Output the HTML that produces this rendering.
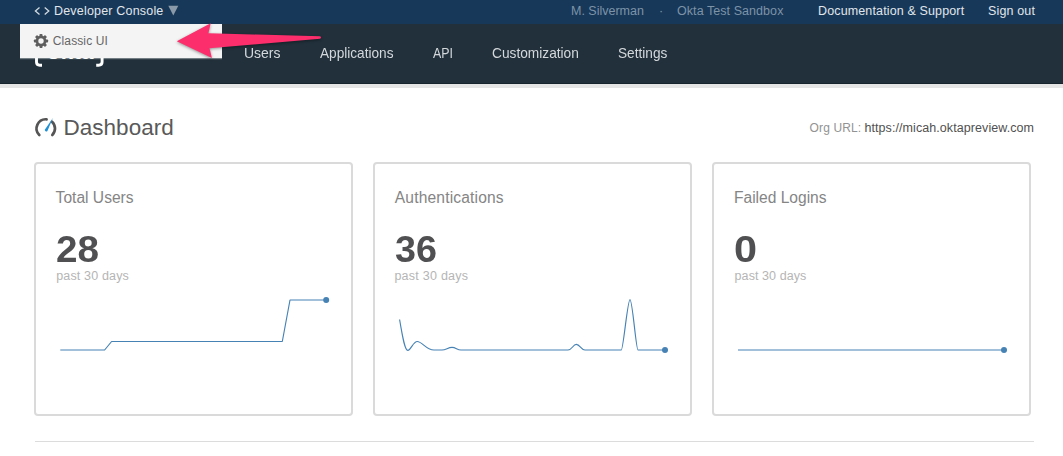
<!DOCTYPE html>
<html><head><meta charset="utf-8">
<style>
html,body{margin:0;padding:0;}
body{width:1063px;height:456px;overflow:hidden;background:#fff;font-family:"Liberation Sans",sans-serif;position:relative;}
.abs{position:absolute;white-space:nowrap;line-height:1;}
#top{position:absolute;left:0;top:0;width:1063px;height:24px;background:#173858;}
#nav{position:absolute;left:0;top:24px;width:1063px;height:60px;background:#21303b;box-shadow:inset 0 -1px 0 #18242d;}
#strip{position:absolute;left:0;top:84px;width:1063px;height:4px;background:#e5e5e5;}
.t1{color:#e0e6ec;font-size:12.5px;}
.t2{color:#7d93a8;font-size:12.5px;}
.nv{color:#d4d8db;font-size:15px;}
#dd{position:absolute;left:20px;top:24px;width:202px;height:34px;background:#f4f4f4;box-shadow:0 1px 0 rgba(255,255,255,0.32),0 2px 0 rgba(255,255,255,0.08);}
.card{position:absolute;top:162px;width:315px;height:250px;border:2px solid #dadada;border-radius:4px;background:#fff;}
.ct{color:#858585;font-size:15.6px;}
.num{color:#505052;font-size:36px;font-weight:bold;}
.sub{color:#b5b5b5;font-size:12.5px;}
</style></head><body>
<div id="top"></div>
<div id="nav"></div>
<div id="strip"></div>

<svg class="abs" style="left:30px;top:4px" width="24" height="14" viewBox="30 4 24 14"><g fill="none" stroke="#d3dae1" stroke-width="1.3"><polyline points="39.5,7.4 35.4,11 39.5,14.6"/><polyline points="44.7,7.4 48.8,11 44.7,14.6"/></g></svg>
<svg class="abs" style="left:168px;top:5px" width="12" height="12"><polygon points="0.3,0.8 10.3,0.8 5.3,10.5" fill="#8b9aa8"/></svg>
<span id="dev" class="abs t1" style="left:54.00px;top:5px;letter-spacing:0.188px;">Developer Console</span>
<span id="ms" class="abs t2" style="left:571.00px;top:5px;">M. Silverman</span>
<span id="dot" class="abs t2" style="left:659.00px;top:5px;">·</span>
<span id="sb" class="abs t2" style="left:677.00px;top:5px;letter-spacing:0.062px;">Okta Test Sandbox</span>
<span id="doc" class="abs t1" style="left:818.00px;top:5px;letter-spacing:0.136px;">Documentation &amp; Support</span>
<span id="so" class="abs t1" style="left:988.00px;top:5px;letter-spacing:0.143px;">Sign out</span>
<span id="users" class="abs nv" style="left:243.80px;top:45px;transform:scaleX(0.9322);transform-origin:0 0;">Users</span>
<span id="apps" class="abs nv" style="left:319.60px;top:45px;transform:scaleX(0.9087);transform-origin:0 0;">Applications</span>
<span id="api" class="abs nv" style="left:433.00px;top:45px;transform:scaleX(0.8272);transform-origin:0 0;">API</span>
<span id="cust" class="abs nv" style="left:492.00px;top:45px;transform:scaleX(0.9140);transform-origin:0 0;">Customization</span>
<span id="set" class="abs nv" style="left:618.00px;top:45px;transform:scaleX(0.9096);transform-origin:0 0;">Settings</span>

<!-- okta logo partially hidden behind the dropdown -->
<span class="abs" style="left:46.8px;top:41px;color:#fff;font-size:22px;font-weight:bold;letter-spacing:0.5px;">okta</span>
<svg class="abs" style="left:30px;top:30px" width="80" height="40" viewBox="30 30 80 40"><g fill="none" stroke="#fff" stroke-width="2.9"><path d="M42 34 H40 Q36.5 34 36.5 38 V62 Q36.5 65.2 39.8 65.2 H42"/><path d="M96.2 34 H98.4 Q102.1 34 102.1 38 V62 Q102.1 65.2 98.6 65.2 H96.2"/></g></svg>

<div id="dd"></div>
<svg class="abs" style="left:33px;top:33px" width="16" height="16" viewBox="0 0 16 16"><g transform="translate(8 8)"><circle r="3.9" fill="none" stroke="#5e5e5e" stroke-width="3"/><g fill="#5e5e5e"><rect x="-1.5" y="-7.1" width="3" height="14.2" rx="0.8"/><rect x="-1.5" y="-7.1" width="3" height="14.2" rx="0.8" transform="rotate(45)"/><rect x="-1.5" y="-7.1" width="3" height="14.2" rx="0.8" transform="rotate(90)"/><rect x="-1.5" y="-7.1" width="3" height="14.2" rx="0.8" transform="rotate(135)"/></g><circle r="2.7" fill="#f4f4f4"/></g></svg>
<span id="classic" class="abs " style="left:52.80px;top:35px;color:#666;font-size:12px;letter-spacing:0.111px;">Classic UI</span>

<svg class="abs" style="left:0;top:0;filter:drop-shadow(0 1px 1.5px rgba(0,0,0,0.4))" width="1063" height="100"><path d="M176.8 41.2 L210.7 23.3 L208.4 33.3 L320 36.3 Q322 37.5 320 38.8 L209.5 48.2 L211.9 57.9 Z" fill="#fc2f6c"/></svg>

<!-- Dashboard -->
<svg class="abs" style="left:30px;top:112px" width="32" height="30" viewBox="30 112 32 30"><g fill="none" stroke="#555" stroke-width="2.7" stroke-linecap="round"><path d="M39.3 135 A9.2 9.2 0 0 1 46.6 119.3"/><path d="M52 121.7 A9.2 9.2 0 0 1 52.3 135"/></g><path d="M52.9 118 L45 129.6 A1.4 1.4 0 0 0 47.4 131 Z" fill="#1f8fd6"/></svg>
<div class="card" style="left:34px;"></div>
<div class="card" style="left:373px;"></div>
<div class="card" style="left:712px;"></div>
<span id="dash" class="abs " style="left:63.60px;top:117px;color:#595959;font-size:22.5px;">Dashboard</span>
<span id="orgl" class="abs " style="left:809.60px;top:122px;color:#929292;font-size:12px;letter-spacing:0.114px;">Org URL:</span>
<span id="orgu" class="abs " style="left:864.40px;top:122px;color:#505050;font-size:12.5px;letter-spacing:0.079px;">https://micah.oktapreview.com</span>
<span id="t1" class="abs ct" style="left:55.60px;top:190px;">Total Users</span>
<span id="t2" class="abs ct" style="left:394.80px;top:190px;letter-spacing:0.157px;">Authentications</span>
<span id="t3" class="abs ct" style="left:734.00px;top:190px;letter-spacing:-0.017px;">Failed Logins</span>
<span id="n1" class="abs num" style="left:56.40px;top:232px;transform:scaleX(1.0739);transform-origin:0 0;">28</span>
<span id="n2" class="abs num" style="left:394.60px;top:232px;transform:scaleX(1.0477);transform-origin:0 0;">36</span>
<span id="n3" class="abs num" style="left:733.80px;top:232px;transform:scaleX(1.1505);transform-origin:0 0;">0</span>
<span id="s1" class="abs sub" style="left:56.20px;top:270px;letter-spacing:0.164px;">past 30 days</span>
<span id="s2" class="abs sub" style="left:394.40px;top:270px;letter-spacing:0.255px;">past 30 days</span>
<span id="s3" class="abs sub" style="left:734.60px;top:270px;letter-spacing:0.073px;">past 30 days</span>

<svg class="abs" style="left:0;top:280px" width="1063" height="176" viewBox="0 280 1063 176">
<g fill="none" stroke="#4682b4" stroke-width="1.15" stroke-linejoin="round">
<path d="M60.3 350 H104.6 L111.6 341.5 H282.3 L290 300 H326"/>
<path d="M399.6 319.5 C403 340 405 350.3 407.8 350.3 C411 350.3 413 341.5 417.3 341.5 C422 341.5 426 350 434 350 H442 C446 350 448 347.4 452 347.4 C456 347.4 457 350 461 350 H568 C572 350 573 344.4 576.3 344.4 C580 344.4 581 350 585 350 H621.3 C623.3 350 627.5 299.6 630 299.6 C632.5 299.6 636 350 638 350 H665"/>
<path d="M738 350 H1004"/>
</g>
<g fill="#4682b4"><circle cx="326.2" cy="300" r="3"/><circle cx="665" cy="350" r="3"/><circle cx="1004" cy="350" r="3"/></g>
<rect x="35" y="441" width="999" height="1" fill="#dcdcdc"/>
</svg>
</body></html>
